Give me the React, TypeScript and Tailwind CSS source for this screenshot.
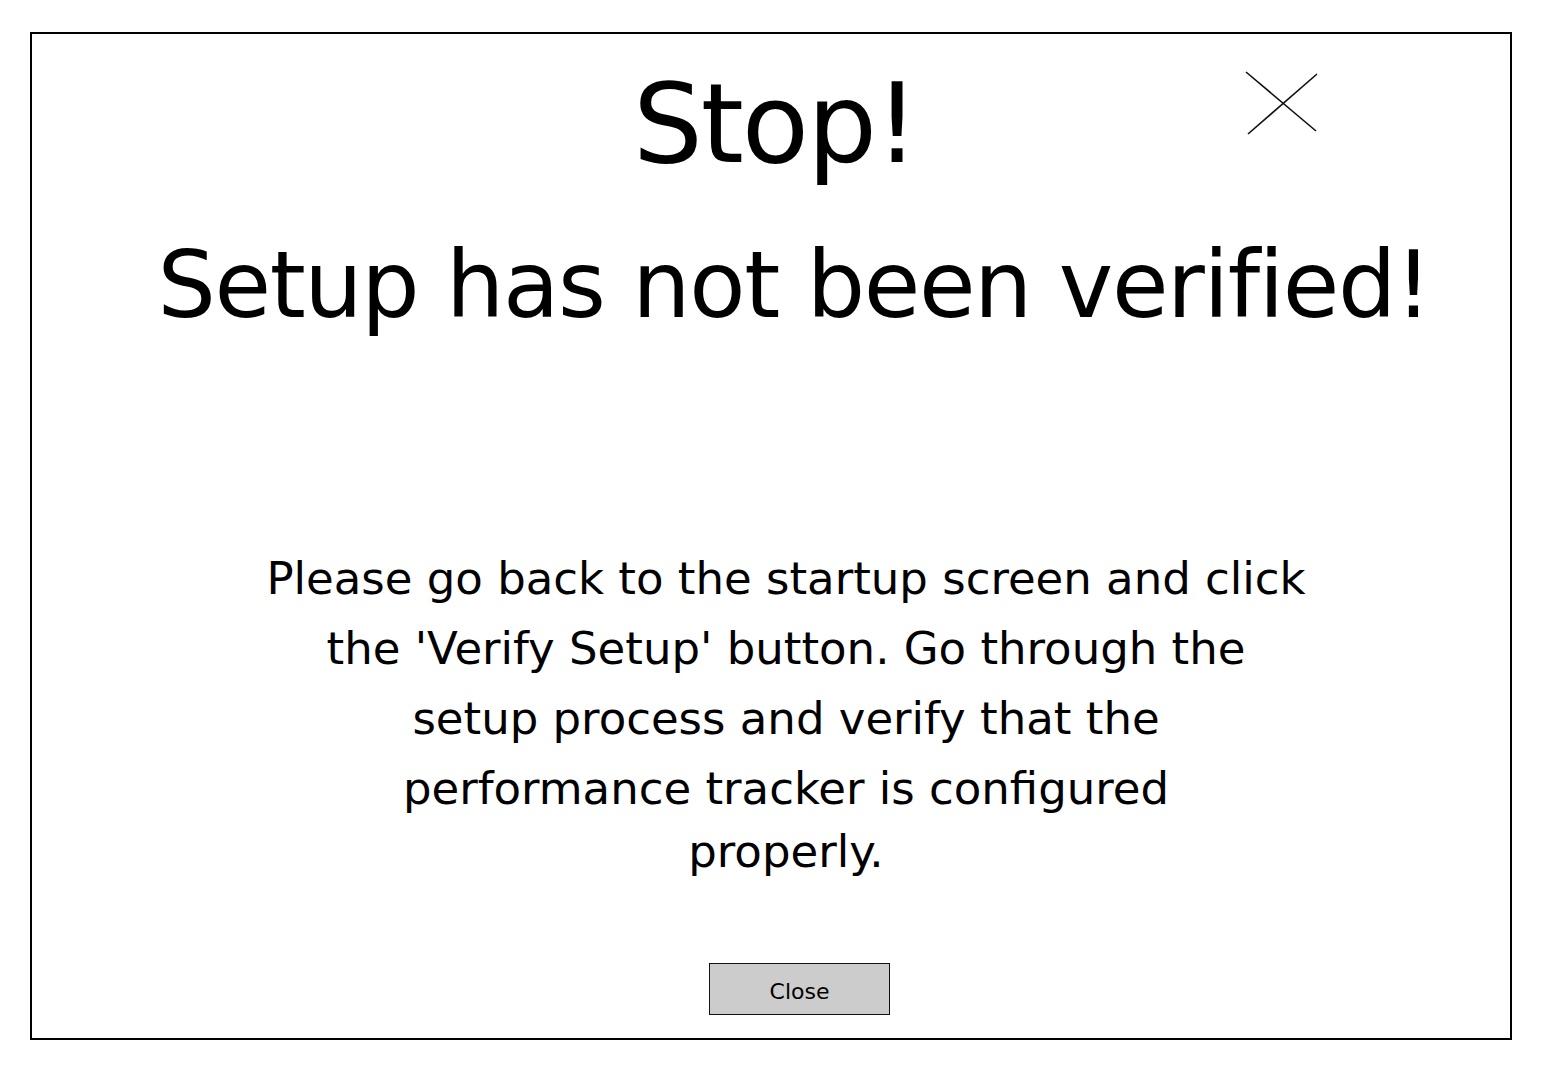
import React from "react";

const font = { fontFamily: '"Comic Sans MS", "DejaVu Sans", "Noto Sans", sans-serif' };

export default function App() {
  return (
    <div className="w-[1548px] h-[1068px] bg-white pt-[32px] pl-[30px]" style={font}>
      <div className="relative w-[1482px] h-[1008px] border-2 border-black flex flex-col items-center text-black">
        <svg
          className="absolute left-[1212px] top-[36px]"
          width="76"
          height="66"
          viewBox="0 0 76 66"
          fill="none"
          stroke="#111"
          strokeWidth="1.6"
        >
          <line x1="2" y1="2" x2="72" y2="61" />
          <line x1="4" y1="64" x2="73" y2="4" />
        </svg>

        <div className="mt-[35px] ml-[8px] text-[110px] leading-[110px] tracking-[-2px]">Stop!</div>
        <div className="mt-[61px] ml-[46px] text-[92px] leading-[92px] tracking-[-1.4px] whitespace-nowrap">
          Setup has not been verified!
        </div>

        <div className="mt-[212px] ml-[30px] text-[45px] leading-[70px] text-center whitespace-nowrap">
          <div>Please go back to the startup screen and click</div>
          <div>the 'Verify Setup' button. Go through the</div>
          <div>setup process and verify that the</div>
          <div>performance tracker is configured</div>
          <div className="-mt-[7px]">properly.</div>
        </div>

        <button className="mt-[76px] ml-[57px] w-[181px] h-[52px] bg-[#cccccc] border-[1.5px] border-[#111] text-[22px] leading-none flex items-center justify-center pt-[5px]">
          Close
        </button>
      </div>
    </div>
  );
}
